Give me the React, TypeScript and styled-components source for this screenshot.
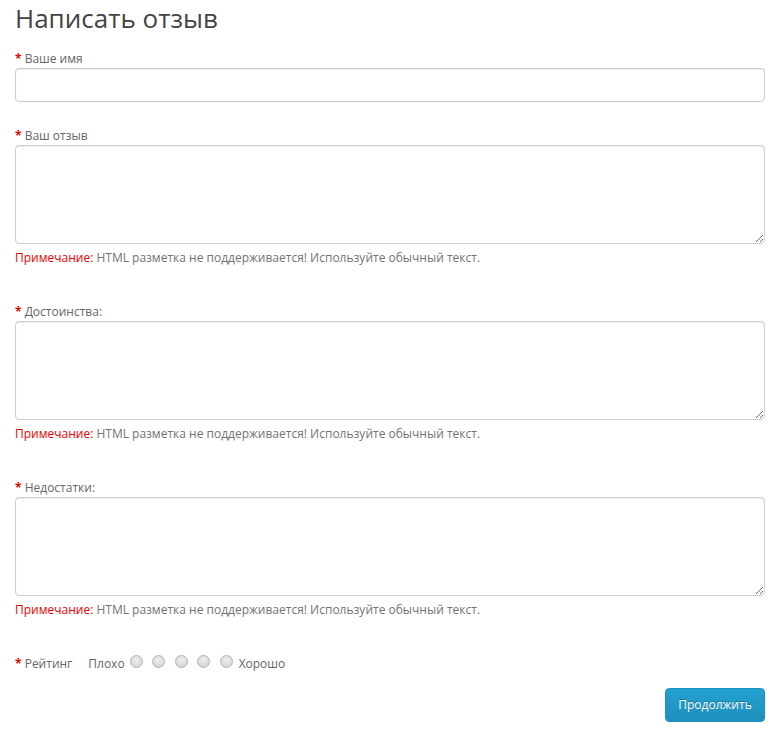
import styled, { createGlobalStyle } from "styled-components";

const GlobalStyle = createGlobalStyle`
  html, body {
    margin: 0;
    padding: 0;
    background: #fff;
  }
  body {
    font-family: "Open Sans", "Noto Sans", sans-serif;
    font-size: 12px;
    line-height: 17px;
    color: #666;
  }
  * {
    box-sizing: border-box;
  }
`;

const Form = styled.form`
  padding: 4px 13px 0 15px;
`;

const Title = styled.h2`
  margin: 0 0 16px;
  font-size: 26px;
  font-weight: 400;
  line-height: 1.1;
  color: #444;
`;

const Group = styled.div<{ $gap?: number }>`
  margin-bottom: ${(p) => p.$gap ?? 24}px;
`;

const Label = styled.label`
  display: block;
  padding-top: 1px;
  margin-bottom: 1px;
  color: #666;

  &::before {
    content: "* ";
    color: #e00;
    font-weight: 700;
  }
`;

const Input = styled.input`
  display: block;
  width: 100%;
  height: 34px;
  padding: 6px 12px;
  border: 1px solid #ccc;
  border-radius: 4px;
  box-shadow: inset 0 1px 1px rgba(0, 0, 0, 0.075);
  font: inherit;
  color: #555;
  background: #fff;
`;

const TextArea = styled.textarea`
  display: block;
  width: 100%;
  height: 99px;
  padding: 6px 12px;
  border: 1px solid #ccc;
  border-radius: 4px;
  box-shadow: inset 0 1px 1px rgba(0, 0, 0, 0.075);
  font: inherit;
  color: #555;
  background: #fff;
  resize: vertical;
`;

const Note = styled.div`
  margin-top: 5px;
  color: #737373;

  span {
    color: #e00;
  }
`;

const RatingRow = styled.div`
  display: flex;
  align-items: center;
  height: 17px;
`;

const RatingLabel = styled.span`
  margin-right: 16px;

  &::before {
    content: "* ";
    color: #e00;
    font-weight: 700;
  }
`;

const Radios = styled.span`
  display: flex;
  align-items: center;
  gap: 9.5px;
  margin: 0 6px 0 5px;
`;

const Radio = styled.input.attrs({ type: "radio", name: "rating" })`
  appearance: none;
  margin: 0;
  width: 13px;
  height: 13px;
  border-radius: 50%;
  border: 1px solid #b4b4b4;
  background: radial-gradient(circle at 50% 35%, #eee, #cfcfcf);
  position: relative;
  top: -2px;
`;

const Buttons = styled.div`
  display: flex;
  justify-content: flex-end;
  margin-top: 16px;
`;

const Button = styled.button`
  width: 100px;
  height: 34px;
  border: 1px solid #1f90bb;
  border-radius: 4px;
  background: linear-gradient(#23a1d1, #1f90bb);
  color: #fff;
  font: inherit;
  text-shadow: 0 -1px 0 rgba(0, 0, 0, 0.25);
  cursor: pointer;
`;

const areas = ["Ваш отзыв", "Достоинства:", "Недостатки:"];

export default function App() {
  return (
    <>
      <GlobalStyle />
      <Form>
        <Title>Написать отзыв</Title>
        <Group>
          <Label>Ваше имя</Label>
          <Input type="text" />
        </Group>
        {areas.map((name, i) => (
          <Group key={name} $gap={i === areas.length - 1 ? 37 : 36}>
            <Label>{name}</Label>
            <TextArea />
            <Note>
              <span>Примечание:</span> HTML разметка не поддерживается! Используйте обычный текст.
            </Note>
          </Group>
        ))}
        <RatingRow>
          <RatingLabel>Рейтинг</RatingLabel>
          Плохо
          <Radios>
            {[1, 2, 3, 4, 5].map((v) => (
              <Radio key={v} value={v} />
            ))}
          </Radios>
          Хорошо
        </RatingRow>
        <Buttons>
          <Button type="button">Продолжить</Button>
        </Buttons>
      </Form>
    </>
  );
}
